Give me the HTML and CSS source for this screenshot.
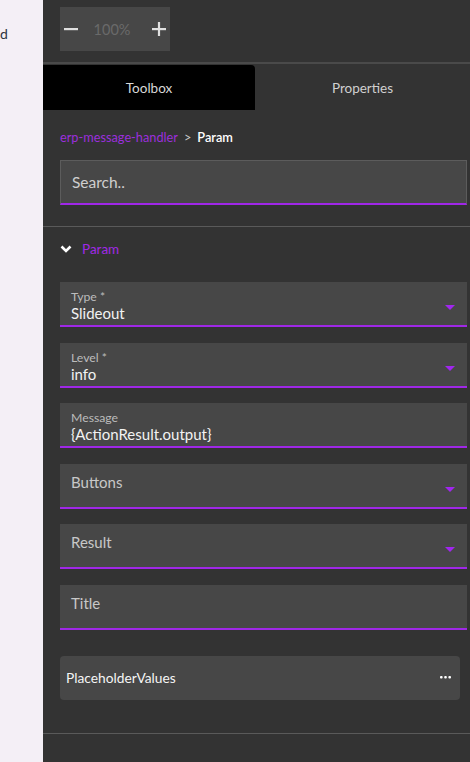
FILE: index.html
```html
<!DOCTYPE html>
<html>
<head>
<meta charset="utf-8">
<link rel="stylesheet" href="styles.css">
</head>
<body>
<div class="left"><span class="stub">d</span></div>
<div class="panel">
  <div class="zoombar">
    <div class="zoombox">
      <span class="zbtn">
        <svg width="14" height="14" viewBox="0 0 14 14"><rect x="0" y="6" width="14" height="2.2" fill="#e0e0e0"/></svg>
      </span>
      <span class="zval">100%</span>
      <span class="zbtn">
        <svg width="14" height="14" viewBox="0 0 14 14"><rect x="0" y="6" width="14" height="2.2" fill="#e0e0e0"/><rect x="5.9" y="0" width="2.2" height="14" fill="#e0e0e0"/></svg>
      </span>
    </div>
  </div>
  <div class="tabs">
    <div class="tab active">Toolbox</div>
    <div class="tab">Properties</div>
  </div>
  <div class="crumbs"><span class="crumb-link">erp-message-handler</span><span class="crumb-sep">&gt;</span><span class="crumb-cur">Param</span></div>
  <div class="search"><span class="search-ph">Search..</span></div>
  <div class="divider"></div>
  <div class="section-head">
    <svg class="chev" width="12" height="8" viewBox="0 0 12 8"><path d="M1.5 1.5 L6 6 L10.5 1.5" fill="none" stroke="#ffffff" stroke-width="2.6"/></svg>
    <span class="section-title">Param</span>
  </div>
  <div class="fields">
    <div class="field">
      <div class="flabel">Type *</div>
      <div class="fvalue">Slideout</div>
      <span class="caret"></span>
    </div>
    <div class="field">
      <div class="flabel">Level *</div>
      <div class="fvalue">info</div>
      <span class="caret"></span>
    </div>
    <div class="field">
      <div class="flabel">Message</div>
      <div class="fvalue">{ActionResult.output}</div>
    </div>
    <div class="field">
      <div class="fph">Buttons</div>
      <span class="caret"></span>
    </div>
    <div class="field">
      <div class="fph">Result</div>
      <span class="caret"></span>
    </div>
    <div class="field">
      <div class="fph">Title</div>
    </div>
  </div>
  <div class="pvalues">
    <span class="pv-name">PlaceholderValues</span>
    <svg width="11" height="3" viewBox="0 0 11 3"><rect x="0" y="0" width="2.6" height="2.6" rx="1" fill="#fff"/><rect x="4.2" y="0" width="2.6" height="2.6" rx="1" fill="#fff"/><rect x="8.4" y="0" width="2.6" height="2.6" rx="1" fill="#fff"/></svg>
  </div>
  <div class="divider bottom"></div>
</div>
</body>
</html>
```

FILE: styles.css
```css
html, body {
  margin: 0;
  padding: 0;
  height: 762px;
  overflow: hidden;
}
body {
  display: flex;
  font-family: Lato, "Noto Sans", sans-serif;
  background: #333333;
}
.left {
  width: 43px;
  flex: none;
  background: #f4eff6;
  overflow: hidden;
}
.stub {
  display: block;
  margin-top: 26px;
  margin-left: 0;
  font-size: 14px;
  line-height: 16px;
  color: #2d3340;
}
.panel {
  flex: 1;
  background: #333333;
  display: flex;
  flex-direction: column;
}
.zoombar {
  height: 64px;
  padding: 7px 0 0 17px;
  box-sizing: border-box;
  border-bottom: 2px solid #4a4a4a;
  margin-bottom: 1px;
}
.zoombox {
  width: 110px;
  height: 44px;
  background: #474747;
  display: flex;
  align-items: center;
  padding: 0 4px;
  box-sizing: border-box;
}
.zbtn {
  width: 14px;
  height: 14px;
  display: flex;
}
.zval {
  flex: 1;
  text-align: center;
  color: #6a6a6a;
  font-size: 14.5px;
  padding-right: 6px;
}
.tabs {
  display: flex;
  height: 45px;
}
.tab {
  flex: 1;
  display: flex;
  align-items: center;
  justify-content: center;
  font-size: 13.5px;
  color: #d0d0d0;
}
.tab.active {
  flex: none;
  width: 212px;
  background: #000000;
  border-top-right-radius: 4px;
  color: #d8d8d8;
}
.crumbs {
  padding: 19px 0 0 17px;
  height: 16px;
  line-height: 16px;
  font-size: 12.75px;
  display: flex;
  gap: 6px;
}
.crumb-link {
  color: #9b2fdc;
}
.crumb-sep {
  color: #c8c8c8;
}
.crumb-cur {
  color: #ffffff;
  font-weight: 600;
}
.search {
  margin: 15px 3px 0 17px;
  height: 45px;
  box-sizing: border-box;
  background: #474747;
  border: 1px solid #5c5c5c;
  border-bottom: 2px solid #a027e8;
  display: flex;
  align-items: center;
  padding-left: 11px;
}
.search-ph {
  color: #cfcfcf;
  font-size: 15.5px;
}
.divider {
  height: 1px;
  background: #5a5a5a;
  margin-top: 21px;
}
.divider.bottom {
  margin-top: 33px;
}
.section-head {
  height: 44px;
  display: flex;
  align-items: center;
  padding-left: 17px;
  gap: 10px;
}
.chev {
  display: block;
}
.section-title {
  color: #a029e6;
  font-size: 13.5px;
}
.fields {
  display: flex;
  flex-direction: column;
  gap: 15.5px;
  margin: 11px 3px 0 17px;
}
.field {
  position: relative;
  height: 45px;
  box-sizing: border-box;
  background: #474747;
  border-bottom: 2px solid #9f28e6;
  padding: 8px 40px 0 11px;
}
.flabel {
  font-size: 12.25px;
  line-height: 13px;
  color: #bcbcbc;
}
.fvalue {
  font-size: 15px;
  line-height: 21px;
  color: #f2f2f2;
}
.fph {
  padding-top: 0;
  font-size: 15px;
  line-height: 20px;
  color: #c8c8c8;
}
.caret {
  position: absolute;
  right: 12px;
  top: 23px;
  width: 0;
  height: 0;
  border-left: 5px solid transparent;
  border-right: 5px solid transparent;
  border-top: 5px solid #a126ef;
}
.pvalues {
  margin: 26px 10px 0 17px;
  height: 44px;
  background: #474747;
  border-radius: 4px;
  display: flex;
  align-items: center;
  justify-content: space-between;
  padding: 0 9px 0 6px;
}
.pv-name {
  color: #f5f5f5;
  font-size: 13.75px;
}
```
